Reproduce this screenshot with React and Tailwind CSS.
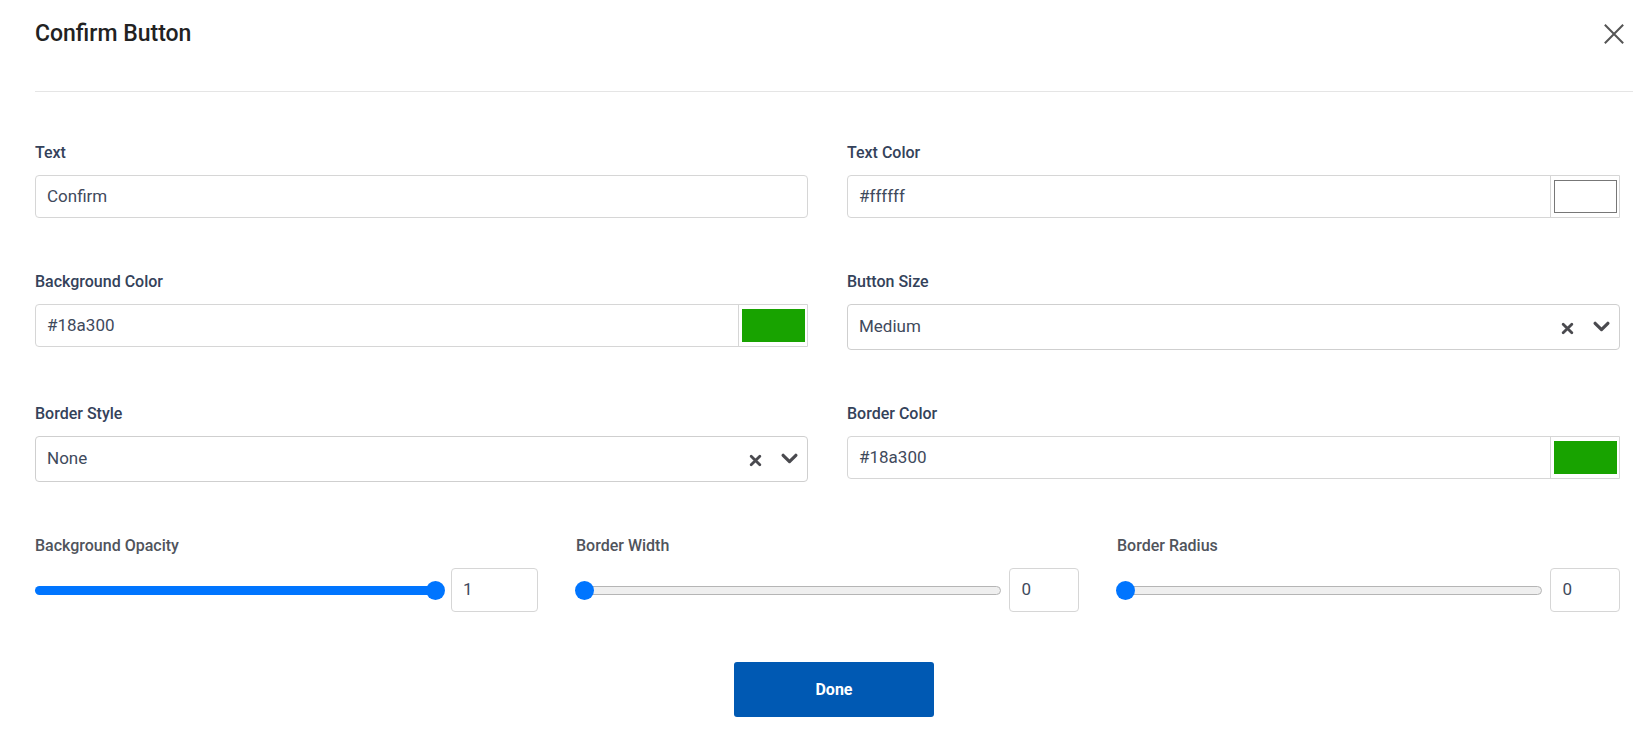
import React from "react";

const Label = ({ children, muted }) => (
  <div className={`text-[16px] leading-[19px] font-medium mb-[13px] ${muted ? "text-[#50545c]" : "text-[#34425a]"}`}>
    {children}
  </div>
);

const ColorInput = ({ value, swatch, light }) => (
  <div className="flex h-[43px] border border-[#d6d6d6] rounded-l-[4px]">
    <div className="flex-1 flex items-center px-[11px] text-[17px] text-[#3f4a5c]">{value}</div>
    <div className="w-[69px] border-l border-[#d6d6d6] flex items-center justify-center">
      <div
        className={`w-[63px] h-[33px] ${light ? "border border-[#777]" : ""}`}
        style={{ background: swatch }}
      />
    </div>
  </div>
);

const SelectBox = ({ value }) => (
  <div className="flex items-center h-[46px] border border-[#cfcfcf] rounded-[4px] pl-[11px] pr-[9px]">
    <div className="flex-1 text-[17px] text-[#3f4a5c]">{value}</div>
    <svg width="13" height="13" viewBox="0 0 12 12" className="mr-[19px] mt-[3px]">
      <path d="M2 2 L10 10 M10 2 L2 10" stroke="#4a4a4f" strokeWidth="2.6" strokeLinecap="round" />
    </svg>
    <svg width="17" height="12" viewBox="0 0 16 11">
      <path d="M2 2 L8 8 L14 2" stroke="#4a4a4f" strokeWidth="3" fill="none" strokeLinecap="round" strokeLinejoin="round" />
    </svg>
  </div>
);

const Slider = ({ label, value, full, trackW, inputW }) => (
  <div className="w-[503px]">
    <Label muted>{label}</Label>
    <div className="flex items-center mt-[10px]">
      <div className="relative h-[20px] flex items-center" style={{ width: trackW }}>
        <div
          className={`w-full h-[9px] rounded-full ${full ? "bg-[#0075ff]" : "bg-[#efefef] border border-[#b5b5b5]"}`}
        />
        <div
          className={`absolute w-[19px] h-[19px] rounded-full bg-[#0075ff] ${full ? "right-[-2px]" : "left-[-1px]"}`}
        />
      </div>
      <div
        className="ml-[8px] h-[44px] border border-[#d6d6d6] rounded-[4px] flex items-center px-[11px] text-[17px] text-[#3f4a5c]"
        style={{ width: inputW }}
      >
        {value}
      </div>
    </div>
  </div>
);

export default function App() {
  return (
    <div className="w-[1652px] h-[750px] bg-white" style={{ fontFamily: "Roboto, 'Liberation Sans', sans-serif" }}>
      <div className="w-[1598px] ml-[35px] pt-[18px]">
        <div className="flex items-center justify-between h-[32px]">
          <h1 className="text-[23px] font-medium text-[#222]">Confirm Button</h1>
          <svg width="22" height="22" viewBox="0 0 24 24" className="mr-[8px]">
            <path d="M2 2 L22 22 M22 2 L2 22" stroke="#555" strokeWidth="2.2" />
          </svg>
        </div>
        <div className="mt-[41px] border-t border-[#e5e5e5]" />

        <div className="w-[1585px] mt-[51px] grid grid-cols-2 gap-x-[39px]">
          <div>
            <Label>Text</Label>
            <div className="h-[43px] border border-[#d6d6d6] rounded-[4px] flex items-center px-[11px] text-[17px] text-[#3f4a5c]">
              Confirm
            </div>
          </div>
          <div>
            <Label>Text Color</Label>
            <ColorInput value="#ffffff" swatch="#ffffff" light />
          </div>

          <div className="mt-[54px]">
            <Label>Background Color</Label>
            <ColorInput value="#18a300" swatch="#18a300" />
          </div>
          <div className="mt-[54px]">
            <Label>Button Size</Label>
            <SelectBox value="Medium" />
          </div>

          <div className="mt-[54px]">
            <Label>Border Style</Label>
            <SelectBox value="None" />
          </div>
          <div className="mt-[54px]">
            <Label>Border Color</Label>
            <ColorInput value="#18a300" swatch="#18a300" />
          </div>
        </div>

        <div className="w-[1585px] mt-[54px] flex justify-between">
          <Slider label="Background Opacity" value="1" full trackW={408} inputW={87} />
          <Slider label="Border Width" value="0" trackW={429} inputW={70} />
          <Slider label="Border Radius" value="0" trackW={429} inputW={70} />
        </div>

        <div className="flex justify-center mt-[50px]">
          <button className="w-[200px] h-[55px] rounded-[3px] bg-[#0059b3] text-white text-[16px] font-bold">
            Done
          </button>
        </div>
      </div>
    </div>
  );
}
